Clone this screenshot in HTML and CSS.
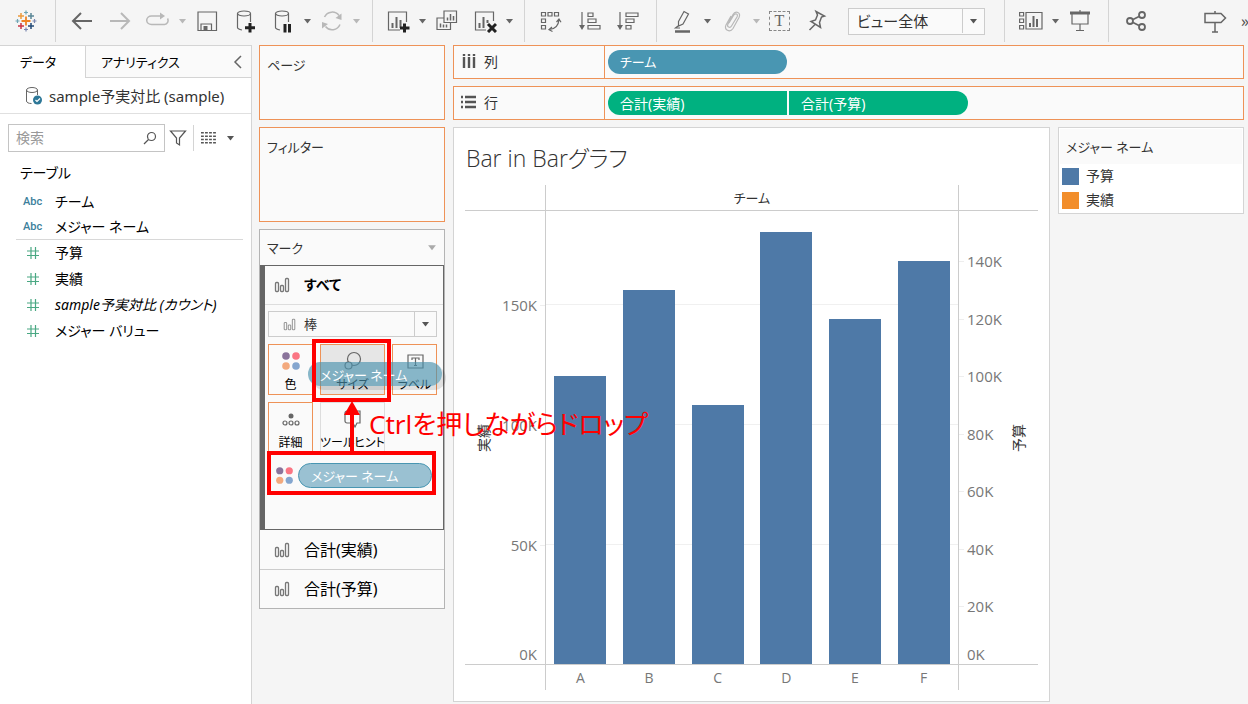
FILE: index.html
```html
<!DOCTYPE html>
<html lang="ja">
<head>
    <meta charset="UTF-8">
    <meta name="viewport" content="width=device-width, initial-scale=1.0">
    <title>Bar in Barグラフ</title>
    <link rel="stylesheet" href="styles.css">
</head>
<body>
    <!-- 共通アイコン -->
    <svg class="symbols" aria-hidden="true">
        <symbol id="bars" viewBox="0 0 16 16">
            <g fill="none" stroke="currentColor" stroke-width="1.3"><rect x="1.5" y="5.5" width="3" height="9" rx="1"/><rect x="6.5" y="8.5" width="3" height="6" rx="1"/><rect x="11.5" y="1.5" width="3" height="13" rx="1"/></g>
        </symbol>
        <symbol id="down" viewBox="0 0 9 6"><path d="M1 1h7L4.5 5.5z" fill="currentColor"/></symbol>
        <symbol id="dots" viewBox="0 0 20 20">
            <circle cx="5" cy="5" r="3.8" fill="#8a749b"/><circle cx="15" cy="5" r="3.8" fill="#fa7583"/>
            <circle cx="5" cy="15" r="3.8" fill="#f3a97d"/><circle cx="15" cy="15" r="3.8" fill="#84a6cf"/>
        </symbol>
        <symbol id="hash" viewBox="0 0 14 14"><path d="M5 1v12M9.5 1v12M1 5h12M1 9.5h12" fill="none" stroke="#4aa883" stroke-width="1.2"/></symbol>
    </svg>

    <!-- ツールバー -->
    <header class="toolbar">
        <div class="group group-logo">
            <button class="tool" aria-label="スタートページ">
                <svg viewBox="0 0 24 24" fill="none">
                    <path d="M12 7.5v9M7.5 12h9" stroke="#ef8424" stroke-width="1.8"/>
                    <path d="M7 4v6M4 7h6" stroke="#eb9a3c" stroke-width="1.5"/>
                    <path d="M17 4v6M14 7h6" stroke="#5b8797" stroke-width="1.5"/>
                    <path d="M7 14v6M4 17h6" stroke="#c93647" stroke-width="1.5"/>
                    <path d="M17 14v6M14 17h6" stroke="#234a76" stroke-width="1.5"/>
                    <path d="M12 1.5v4M10 3.5h4M3.5 10v4M1.5 12h4" stroke="#6fa5b4"/>
                    <path d="M12 18.5v4M10 20.5h4M20.5 10v4M18.5 12h4" stroke="#7986b0"/>
                </svg>
            </button>
        </div>
        <div class="group group-data">
            <button class="tool" aria-label="元に戻す"><svg viewBox="0 0 24 24"><path d="M22 12H3.5M11 4l-8 8 8 8" stroke-width="2"/></svg></button>
            <button class="tool" aria-label="やり直し" disabled><svg viewBox="0 0 24 24"><path d="M2 12h18.5M13 4l8 8-8 8" stroke-width="2"/></svg></button>
            <button class="tool" aria-label="繰り返し" disabled><svg viewBox="0 0 24 24"><path d="M14.5 7H5.5a4.5 4 0 0 0 0 8.5h13a4 4 0 0 0 3-6" stroke-width="1.5"/><path d="M14 3.5 19 7l-5 3.5z" fill="currentColor" stroke="none"/></svg></button>
            <button class="caret" aria-label="繰り返しメニュー" disabled><svg><use href="#down"/></svg></button>
            <button class="tool" aria-label="保存"><svg viewBox="0 0 24 24"><path d="M3 3h18.5v18.5H3zM6 21v-6h10.5v6"/><path d="M8.5 17h4v4h-4z" fill="currentColor" stroke="none"/></svg></button>
            <button class="tool" aria-label="新しいデータソース"><svg viewBox="0 0 24 24"><ellipse cx="11" cy="4.5" rx="6.5" ry="2.5"/><path d="M4.5 4.5v14c0 1.5 2 2 4.5 2.5M17.5 4.5V13"/><path class="strong" d="M17 14v9.5M12 18.7h10"/></svg></button>
            <button class="tool" aria-label="自動更新の一時停止"><svg viewBox="0 0 24 24"><ellipse cx="11" cy="4.5" rx="6.5" ry="2.5"/><path d="M4.5 4.5v14c0 1.5 2 2 4.5 2.5M17.5 4.5V13"/><path class="strong" d="M14 15v8.5M18.5 15v8.5"/></svg></button>
            <button class="caret" aria-label="自動更新メニュー"><svg><use href="#down"/></svg></button>
            <button class="tool" aria-label="更新" disabled><svg viewBox="0 0 24 24"><path d="M4.5 8A8.5 8.5 0 0 1 19 6.5M20 15.5A8.5 8.5 0 0 1 5.5 17.5" stroke-width="1.5"/><path d="M21.5 4.5V11l-6-2zM2 19.5V13l6 2z" fill="currentColor" stroke="none"/></svg></button>
            <button class="caret" aria-label="更新メニュー" disabled><svg><use href="#down"/></svg></button>
        </div>
        <div class="group group-sheet">
            <button class="tool" aria-label="新しいワークシート"><svg viewBox="0 0 24 24"><path d="M14 21H2.5V3h18v10"/><path d="M6.5 19v-5M10.5 19V8M14.5 19v-8" stroke-width="2"/><path class="strong" d="M18.5 14.5v9M14 19h9.5"/></svg></button>
            <button class="caret" aria-label="ワークシートメニュー"><svg><use href="#down"/></svg></button>
            <button class="tool" aria-label="複製"><svg viewBox="0 0 24 24"><path d="M9 2h12.5v11.5H9zM9 9H2v11.5h13.5v-7"/><path d="M12.5 11.5v-3M15.5 11.5V5M18.5 11.5V7M5.5 18.5v-4M8.5 18.5v-3M11.5 18.5v-3" stroke-width="1.5"/></svg></button>
            <button class="tool" aria-label="シートのクリア"><svg viewBox="0 0 24 24"><path d="M13 21H2.5V3h18v9"/><path d="M6.5 19v-5M10.5 19V8M14.5 14v-3" stroke-width="2"/><path class="strong" d="m15 15 8 8m0-8-8 8"/></svg></button>
            <button class="caret" aria-label="クリアメニュー"><svg><use href="#down"/></svg></button>
        </div>
        <div class="group group-sort">
            <button class="tool" aria-label="行と列の交換"><svg viewBox="0 0 24 24"><path d="M2.5 3.5h4v3.5h-4zM9 3.5h4v3.5H9zM15.5 3.5h4v3.5h-4zM2.5 10h4v3.5h-4zM2.5 16.5h4V20h-4zM10.5 20.5c6-.5 9-4 9.5-10M13 18l-3 2.7 3.5 1.8M17.5 13l2.5-3 2 3.3"/></svg></button>
            <button class="tool" aria-label="昇順で並べ替え"><svg viewBox="0 0 24 24"><path d="M5 3v15M11 4h5v3.5h-5zM11 10h8v3.5h-8zM11 16.5h12V20H11z"/><path d="M2 16h6l-3 5z" fill="currentColor" stroke="none"/></svg></button>
            <button class="tool" aria-label="降順で並べ替え"><svg viewBox="0 0 24 24"><path d="M5 3v15M11 4h12v3.5H11zM11 10h8v3.5h-8zM11 16.5h5V20h-5z"/><path d="M2 16h6l-3 5z" fill="currentColor" stroke="none"/></svg></button>
        </div>
        <div class="group group-edit">
            <button class="tool" aria-label="ハイライト"><svg viewBox="0 0 24 24"><path d="m7.5 12.5 5.5-10 4.5 2.5-5.5 10-4.5 2zM7.5 12.5V17M7 17l-2.5 2h4.5"/><path d="M4 22.5h15" stroke-width="2.5"/></svg></button>
            <button class="caret" aria-label="ハイライトメニュー"><svg><use href="#down"/></svg></button>
            <button class="tool" aria-label="グループ" disabled><svg viewBox="0 0 24 24"><path d="m9 14 4.5-7.5c2-3 5-1.5 3.5 1.5L11.5 17c-1.500 2.500-5 1-3.500-2L13 5.500c2.500-4.500 8.500-2 6 3l-6 11c-3 4.500-9.500 1.500-7-3.500L11 7"/></svg></button>
            <button class="caret" aria-label="グループメニュー" disabled><svg><use href="#down"/></svg></button>
            <button class="tool label-tool" aria-label="マークラベルの表示">T</button>
            <button class="tool" aria-label="固定"><svg viewBox="0 0 24 24"><path d="m12 2.500 8.500 4.500-3 1-2 5.500 1 5-9.500-6 4.500-1.500 2-5zM11 15.500l-5.500 5.500" stroke-width="1.500"/></svg></button>
            <span class="drop fit-drop">
                <select aria-label="適合"><option>ビュー全体</option></select>
                <svg><use href="#down"/></svg>
            </span>
        </div>
        <div class="group group-show">
            <button class="tool" aria-label="表示形式"><svg viewBox="0 0 24 24"><path d="M.6 3.5h4v3.5h-4zM.6 10h4v3.5h-4zM.6 16.5h4V20h-4zM7 3.5h16V20H7z"/><path d="M11 18v-4M14.5 18V7M18 18v-8" stroke-width="2"/></svg></button>
            <button class="caret" aria-label="表示メニュー"><svg><use href="#down"/></svg></button>
            <button class="tool" aria-label="プレゼンテーションモード"><svg viewBox="0 0 24 24"><path d="M2 4h20" stroke-width="3"/><path d="M4 5v10h16V5M12 15v6M8 21.5h8M12 1v2"/></svg></button>
        </div>
        <div class="group group-share">
            <button class="tool" aria-label="共有"><svg viewBox="0 0 24 24"><g stroke-width="1.8"><circle cx="6" cy="12" r="3"/><circle cx="18" cy="6" r="3"/><circle cx="18" cy="18" r="3"/><path d="m9 10.5 6-3M9 13.5l6 3"/></g></svg></button>
        </div>
        <div class="group group-guide">
            <button class="tool" aria-label="ガイド"><svg viewBox="0 0 24 24"><path d="M2 4.5h16l4.5 4.5L18 13.5H2zM12 13.5V23M12 2v2.5M9 23h6" stroke-width="1.5"/></svg></button>
            <button class="more" aria-label="その他">»</button>
        </div>
    </header>

    <div class="workspace">
        <!-- データペイン -->
        <aside class="data-pane">
            <div class="tabs">
                <button class="tab tab-active">データ</button>
                <button class="tab tab-other">アナリティクス<svg viewBox="0 0 10 14"><path d="M8 1 2 7l6 6" fill="none" stroke="currentColor" stroke-width="1.5"/></svg></button>
            </div>
            <a class="source" href="#source">
                <svg viewBox="0 0 18 20" fill="none" stroke="#666"><ellipse cx="7" cy="4" rx="5.5" ry="2.5"/><path d="M1.5 4v11c0 1.5 2 2.5 5 2.5M12.5 4v5"/><circle cx="12.5" cy="14" r="4.5" fill="#2d7797" stroke="none"/><path d="m10.5 14 1.5 1.5 3-3" stroke="#fff" stroke-width="1.2"/></svg>
                sample予実対比 (sample)
            </a>
            <div class="search-row">
                <label class="search">
                    <input type="text" placeholder="検索" aria-label="検索">
                    <svg viewBox="0 0 14 14"><circle cx="8.5" cy="5.5" r="4"/><path d="M5.5 8.5 1 13"/></svg>
                </label>
                <button class="icon-button" aria-label="フィルター"><svg viewBox="0 0 18 18"><path d="M1.5 2h15l-6 7v7l-3-2V9z"/></svg></button>
                <button class="icon-button view-button" aria-label="表示"><svg viewBox="0 0 16 14"><path d="M0 1.5h16M0 5h16M0 8.5h16M0 12h16" stroke-width="1.6" stroke-dasharray="3 1.3"/></svg></button>
                <button class="caret" aria-label="表示メニュー"><svg><use href="#down"/></svg></button>
            </div>
            <h2 class="table-title">テーブル</h2>
            <ul class="fields dimensions">
                <li><span class="abc">Abc</span>チーム</li>
                <li><span class="abc">Abc</span>メジャー ネーム</li>
            </ul>
            <ul class="fields measures">
                <li><svg><use href="#hash"/></svg>予算</li>
                <li><svg><use href="#hash"/></svg>実績</li>
                <li class="count"><svg><use href="#hash"/></svg>sample予実対比 (カウント)</li>
                <li><svg><use href="#hash"/></svg>メジャー バリュー</li>
            </ul>
        </aside>

        <!-- シェルフとマークカード -->
        <div class="cards">
            <section class="card pages">ページ</section>
            <section class="card filters">フィルター</section>
            <section class="marks">
                <div class="marks-head">マーク<svg><use href="#down"/></svg></div>
                <div class="marks-all">
                    <div class="mark-row mark-current"><svg><use href="#bars"/></svg>すべて</div>
                    <div class="mark-body">
                        <div class="drop mark-type">
                            <svg class="type-icon"><use href="#bars"/></svg>
                            <select aria-label="マークタイプ"><option>棒</option></select>
                            <svg><use href="#down"/></svg>
                        </div>
                        <div class="mark-buttons">
                            <button><svg><use href="#dots"/></svg>色</button>
                            <button class="hovered"><svg viewBox="0 0 20 20"><circle cx="11" cy="8" r="6.5"/><circle cx="5.5" cy="14.5" r="3.5" fill="#e6e6e6"/></svg>サイズ</button>
                            <button><svg viewBox="0 0 20 20"><path d="M3 4h15v13H3zM7 9V7h7v2M10.5 7v7.5M9 14.5h3"/></svg>ラベル</button>
                            <button><svg viewBox="0 0 20 20"><circle cx="10" cy="7" r="2.5" fill="#666" stroke="none"/><circle cx="4" cy="14" r="2"/><circle cx="10" cy="14" r="2"/><circle cx="16" cy="14" r="2"/></svg>詳細</button>
                            <button class="plain"><svg viewBox="0 0 20 20"><path d="M4 2h13v12h-3l-2 4-2-4H4a2 2 0 0 1-2-2V4a2 2 0 0 1 2-2z"/></svg>ツールヒント</button>
                        </div>
                        <div class="mark-pill-row">
                            <svg><use href="#dots"/></svg>
                            <span class="mark-pill">メジャー ネーム</span>
                        </div>
                    </div>
                </div>
                <div class="mark-row"><svg><use href="#bars"/></svg>合計(実績)</div>
                <div class="mark-row"><svg><use href="#bars"/></svg>合計(予算)</div>

                <!-- ドラッグ中のピルと操作の説明 -->
                <span class="drag-pill">メジャー ネーム</span>
                <span class="frame frame-target"></span>
                <span class="frame frame-source"></span>
                <svg class="arrow" viewBox="0 0 16 54"><path d="M8 54V12" stroke="#f00" stroke-width="4"/><path d="M8 0 16 14H0z" fill="#f00"/></svg>
                <p class="note">Ctrlを押しながらドロップ</p>
            </section>
        </div>

        <main class="sheet">
            <div class="shelf">
                <div class="shelf-name"><svg viewBox="0 0 16 16"><path d="M3 0v2M8 0v2M13 0v2M3 3v11M8 3v11M13 3v11" stroke-width="2.4"/></svg>列</div>
                <div class="pills"><span class="pill pill-blue">チーム</span></div>
            </div>
            <div class="shelf">
                <div class="shelf-name"><svg viewBox="0 0 16 16"><path d="M0 2h2M0 7h2M0 12h2M4 2h11M4 7h11M4 12h11" stroke-width="2.4"/></svg>行</div>
                <div class="pills">
                    <span class="pill pill-green pill-first">合計(実績)</span>
                    <span class="pill pill-green pill-last">合計(予算)</span>
                </div>
            </div>

            <div class="content">
                <section class="view">
                    <h1>Bar in Barグラフ</h1>
                    <div class="chart">
                        <div class="chart-head"></div>
                        <div class="chart-head chart-middle">チーム</div>
                        <div class="chart-head"></div>

                        <div class="axis axis-left">
                            <span class="axis-title">実績</span>
                            <span class="tick tick-zero">0K</span>
                            <span class="tick" style="bottom: 26.3%">50K</span>
                            <span class="tick" style="bottom: 52.8%">100K</span>
                            <span class="tick" style="bottom: 79.3%">150K</span>
                        </div>
                        <div class="plot chart-middle">
                            <i class="grid-line" style="bottom: 26.3%"></i>
                            <i class="grid-line" style="bottom: 52.8%"></i>
                            <i class="grid-line" style="bottom: 79.3%"></i>
                            <div class="bar" style="height: 63.5%"></div>
                            <div class="bar" style="height: 82.5%"></div>
                            <div class="bar" style="height: 57.2%"></div>
                            <div class="bar" style="height: 95.3%"></div>
                            <div class="bar" style="height: 76.2%"></div>
                            <div class="bar" style="height: 88.9%"></div>
                        </div>
                        <div class="axis axis-right">
                            <span class="tick tick-zero">0K</span>
                            <span class="tick" style="bottom: 12.7%">20K</span>
                            <span class="tick" style="bottom: 25.4%">40K</span>
                            <span class="tick" style="bottom: 38.1%">60K</span>
                            <span class="tick" style="bottom: 50.8%">80K</span>
                            <span class="tick" style="bottom: 63.5%">100K</span>
                            <span class="tick" style="bottom: 76.2%">120K</span>
                            <span class="tick" style="bottom: 88.9%">140K</span>
                            <span class="axis-title">予算</span>
                        </div>

                        <div class="chart-foot"></div>
                        <div class="chart-foot chart-middle categories">
                            <span>A</span><span>B</span><span>C</span><span>D</span><span>E</span><span>F</span>
                        </div>
                        <div class="chart-foot"></div>
                    </div>
                </section>
                <section class="legend">
                    <h2>メジャー ネーム</h2>
                    <ul>
                        <li><i class="swatch swatch-budget"></i>予算</li>
                        <li><i class="swatch swatch-actual"></i>実績</li>
                    </ul>
                </section>
            </div>
        </main>
    </div>
</body>
</html>
```
FILE: styles.css
```css
* {
    box-sizing: border-box;
}

body {
    display: flex;
    flex-direction: column;
    min-height: 100vh;
    margin: 0;
    background-color: #f5f5f5;
    color: #000;
    font-family: "Noto Sans", "Noto Sans CJK JP", sans-serif;
    font-size: 14px;
    line-height: 20px;
    font-feature-settings: "palt";
}

button, input, select {
    padding: 0;
    border: 0;
    background: none;
    color: inherit;
    font: inherit;
    font-feature-settings: inherit;
}

h1, h2, ul, p {
    margin: 0;
    padding: 0;
    font-weight: normal;
    list-style: none;
}

svg {
    display: block;
    flex: none;
}

.symbols {
    position: absolute;
    width: 0;
    height: 0;
}

/* ツールバー */
.toolbar {
    display: flex;
    height: 45px;
    padding-bottom: 3px;
    color: #666;
    overflow: hidden;
}

.group {
    display: flex;
    align-items: center;
    gap: 14px;
    padding: 0 17px 0 14px;
    border-right: 1px solid #d4d4d4;
}

.group-sheet {
    padding: 0 16px 0 13px;
}

.group-edit {
    padding: 0 19px 0 14px;
}

.group-show {
    padding: 0 16px 0 14px;
}

.group-share {
    padding: 0 15px;
    border: 0;
}

.group-guide {
    padding: 0;
    margin-left: auto;
    border: 0;
}

.tool {
    width: 24px;
    height: 24px;
}

.tool svg {
    width: 24px;
    height: 24px;
    fill: none;
    stroke: currentColor;
    stroke-width: 1.2;
}

.group-logo .tool svg {
    stroke: none;
}

.tool .strong {
    stroke: #222;
    stroke-width: 3;
}

.tool:disabled, .caret:disabled {
    color: #b8b8b8;
}

.caret {
    width: 9px;
    margin: 0 -6px;
}

.caret svg {
    width: 9px;
    height: 6px;
}

.label-tool {
    width: 21px;
    height: 20px;
    border: 1px dashed #888;
    font-family: "Liberation Serif", serif;
    font-size: 16px;
    line-height: 18px;
}

.more {
    width: 7px;
    color: #555;
    font-size: 16px;
}

.drop {
    display: flex;
    align-items: center;
    position: relative;
    border: 1px solid #ccc;
    background-color: #fafafa;
}

.drop select {
    flex: 1;
    align-self: stretch;
    appearance: none;
    padding-left: 8px;
}

.drop > svg:last-child {
    width: 22px;
    height: 24px;
    padding: 9px 6px;
    border-left: 1px solid #ccc;
    color: #555;
    pointer-events: none;
}

.fit-drop {
    width: 137px;
    height: 27px;
    margin-left: 6px;
    color: #333;
    font-size: 15px;
}

/* 全体のレイアウト */
.workspace {
    display: grid;
    grid-template-columns: 252px 186px 1fr;
    gap: 7px;
    flex: 1;
    padding-right: 4px;
}

/* データペイン */
.data-pane {
    border-top: 1px solid #d4d4d4;
    border-right: 1px solid #d4d4d4;
    background-color: #fff;
}

.tabs {
    display: flex;
    height: 32px;
}

.tab {
    font-size: 13px;
}

.tab-active {
    width: 85px;
    padding-right: 9px;
}

.tab-other {
    display: flex;
    flex: 1;
    align-items: center;
    justify-content: space-between;
    padding: 0 8px 0 15px;
    border-left: 1px solid #d4d4d4;
    border-bottom: 1px solid #d4d4d4;
    background-color: #fafafa;
}

.tab-other svg {
    width: 10px;
    height: 14px;
    color: #666;
}

.source {
    display: flex;
    align-items: center;
    gap: 6px;
    height: 36px;
    padding-left: 25px;
    border-bottom: 1px solid #e0e0e0;
    color: #333;
    font-size: 15px;
    text-decoration: none;
    white-space: nowrap;
}

.source svg {
    width: 18px;
    height: 20px;
}

.search-row {
    display: flex;
    align-items: center;
    padding: 10px 0 9px 8px;
    color: #555;
}

.search {
    display: flex;
    align-items: center;
    width: 157px;
    height: 28px;
    padding: 0 7px;
    border: 1px solid #c4c4c4;
}

.search input {
    flex: 1;
    min-width: 0;
}

.search input::placeholder {
    color: #999;
}

.search svg, .icon-button svg {
    width: 14px;
    height: 14px;
    fill: none;
    stroke: currentColor;
    stroke-width: 1.2;
}

.icon-button {
    padding: 4px;
}

.icon-button svg {
    width: 18px;
    height: 18px;
}

.view-button {
    margin-left: 2px;
    padding: 4px 7px;
    border-left: 1px solid #d4d4d4;
}

.view-button svg {
    width: 15px;
}

.search-row .caret {
    margin: 0 3px;
}

.table-title {
    height: 28px;
    padding-left: 20px;
    font-size: 14px;
    line-height: 24px;
}

.fields li {
    display: flex;
    align-items: center;
    height: 26px;
    white-space: nowrap;
}

.fields svg {
    width: 14px;
    height: 14px;
    margin: 0 15px 0 26px;
}

.dimensions {
    margin: 0 8px 0 16px;
    border-bottom: 1px solid #d8d8d8;
}

.dimensions li {
    height: 25px;
}

.abc {
    width: 39px;
    padding-left: 7px;
    color: #3c7f9b;
    font-family: Roboto, sans-serif;
    font-size: 11px;
    font-weight: 500;
}

.count {
    font-style: italic;
}

/* カード */
.cards {
    display: flex;
    flex-direction: column;
    gap: 7px;
    position: relative;
    z-index: 1;
    min-width: 0;
    color: #333;
    font-size: 13px;
}

.card {
    height: 75px;
    padding: 9px 7px;
    border: 1px solid #ee9257;
    background-color: #fafafa;
}

.filters {
    height: 95px;
}

.marks {
    position: relative;
    border: 1px solid #b4b4b4;
    background-color: #fafafa;
}

.marks-head {
    display: flex;
    align-items: center;
    justify-content: space-between;
    height: 35px;
    padding: 0 7px;
}

.marks-head svg {
    width: 10px;
    height: 7px;
    color: #aaa;
}

.marks-all {
    height: 265px;
    border: 1px solid #666;
    border-left-width: 5px;
}

.mark-row {
    display: flex;
    align-items: center;
    gap: 14px;
    height: 39px;
    padding-left: 14px;
    color: #000;
    font-size: 16px;
}

.mark-row + .mark-row {
    border-top: 1px solid #ccc;
}

.mark-row svg {
    width: 16px;
    height: 16px;
    color: #777;
}

.mark-current {
    padding-left: 9px;
    border-bottom: 1px solid #ddd;
    font-size: 14px;
    font-weight: bold;
}

.mark-body {
    padding: 6px 6px 0 3px;
}

.mark-type {
    height: 26px;
    padding-left: 14px;
    color: #333;
}

.mark-type .type-icon {
    width: 13px;
    height: 13px;
    color: #999;
}

.mark-buttons {
    display: grid;
    grid-template-columns: 45px minmax(0, 1fr) 45px;
    gap: 7px;
    padding: 7px 0 9px;
}

.mark-buttons button {
    display: flex;
    flex-direction: column;
    align-items: center;
    min-width: 0;
    height: 51px;
    padding-top: 6px;
    border: 1px solid #ee9257;
    color: #000;
    font-size: 12px;
    line-height: 28px;
    white-space: nowrap;
}

.mark-buttons svg {
    width: 20px;
    height: 20px;
    fill: none;
    stroke: #666;
    stroke-width: 1.2;
}

.mark-buttons .hovered {
    background-color: #e6e6e6;
}

.mark-buttons use {
    stroke: none;
}

.mark-buttons .plain {
    border-color: #ddd;
}

.mark-pill-row {
    display: flex;
    align-items: center;
    gap: 4px;
    padding: 1px 5px 0 7px;
}

.mark-pill-row svg {
    width: 19px;
    height: 19px;
}

.mark-pill {
    flex: 1;
    height: 25px;
    padding-left: 12px;
    border: 1px solid #4996b2;
    border-radius: 13px;
    background-color: #9ac1d2;
    color: #fff;
    line-height: 25px;
}

.drag-pill {
    position: absolute;
    top: 132px;
    left: 48px;
    width: 134px;
    height: 24px;
    padding-left: 12px;
    border-radius: 12px;
    background-color: rgba(73, 146, 174, 0.65);
    box-shadow: 4px 4px 0 rgba(0, 0, 0, 0.1);
    color: #fff;
    line-height: 26px;
}

.frame {
    position: absolute;
    border: 4px solid #f00;
}

.frame-target {
    top: 109px;
    left: 52px;
    width: 79px;
    height: 63px;
}

.frame-source {
    top: 221px;
    left: 7px;
    width: 169px;
    height: 44px;
}

.arrow {
    position: absolute;
    top: 171px;
    left: 84px;
    width: 16px;
    height: 54px;
}

.note {
    position: absolute;
    top: 174px;
    left: 109px;
    color: #f00;
    font-size: 26px;
    line-height: 40px;
    white-space: nowrap;
}

/* 行・列シェルフ */
.sheet {
    display: flex;
    flex-direction: column;
    gap: 7px;
    min-width: 0;
    margin-left: 1px;
    padding-bottom: 2px;
}

.shelf {
    display: flex;
    height: 34px;
    border: 1px solid #ee9257;
    background-color: #fafafa;
    color: #333;
}

.shelf-name {
    display: flex;
    align-items: center;
    gap: 7px;
    width: 151px;
    padding-left: 7px;
    border-right: 1px solid #ee9257;
}

.shelf-name svg {
    width: 16px;
    height: 16px;
    stroke: #555;
}

.pills {
    display: flex;
    align-items: center;
    gap: 2px;
    padding-left: 3px;
}

.pill {
    width: 179px;
    height: 24px;
    padding-left: 12px;
    border-radius: 12px;
    color: #fff;
    font-size: 13px;
    line-height: 25px;
}

.pill-blue {
    background-color: #4996b2;
}

.pill-green {
    background-color: #00b180;
    font-size: 14px;
}

.pill-first {
    border-radius: 12px 0 0 12px;
}

.pill-last {
    border-radius: 0 12px 12px 0;
}

/* ビュー */
.content {
    display: grid;
    grid-template-columns: 1fr 186px;
    align-items: start;
    gap: 8px;
    flex: 1;
}

.view {
    display: flex;
    flex-direction: column;
    align-self: stretch;
    padding: 0 11px 11px;
    border: 1px solid #d4d4d4;
    background-color: #fff;
    color: #333;
}

.view h1 {
    height: 57px;
    padding-left: 1px;
    font-family: "Open Sans", "Noto Sans CJK JP", sans-serif;
    font-size: 23px;
    font-weight: 300;
    line-height: 61px;
}

.chart {
    display: grid;
    grid-template-columns: 80px 1fr 79px;
    grid-template-rows: 26px 1fr 26px;
    flex: 1;
}

.chart-head {
    border-bottom: 1px solid #ccc;
    font-size: 13px;
    line-height: 26px;
    text-align: center;
}

.chart-middle {
    border-right: 1px solid #ccc;
    border-left: 1px solid #ccc;
}

.chart-foot {
    border-top: 1px solid #ccc;
}

.axis {
    display: flex;
    align-items: center;
    position: relative;
}

.axis-left {
    padding-left: 9px;
}

.axis-right {
    justify-content: flex-end;
    padding-right: 9px;
}

.axis-title {
    writing-mode: vertical-rl;
    text-orientation: sideways;
    transform: rotate(180deg);
}

.tick {
    position: absolute;
    left: 0;
    height: 20px;
    margin-bottom: -10px;
    padding-left: 8px;
    color: #777;
    font-family: "Open Sans", sans-serif;
    font-size: 15px;
}

.axis-left .tick {
    right: 0;
    left: auto;
    padding: 0 8px 0 0;
}

.tick::after {
    content: "";
    position: absolute;
    top: 10px;
    left: 0;
    width: 5px;
    border-top: 1px solid #eee;
}

.axis-left .tick::after {
    right: 0;
    left: auto;
}

.tick-zero {
    bottom: 0;
    margin-bottom: 0;
}

.tick-zero::after {
    display: none;
}

.plot {
    display: grid;
    grid-template-columns: repeat(6, 1fr);
    align-items: end;
    justify-items: center;
    position: relative;
}

.grid-line {
    position: absolute;
    right: 0;
    left: 0;
    border-top: 1px solid #f0f0f0;
}

.bar {
    position: relative;
    width: 76%;
    background-color: #4e79a7;
}

.categories {
    display: grid;
    grid-template-columns: repeat(6, 1fr);
    color: #777;
    font-family: "Open Sans", sans-serif;
    line-height: 26px;
    text-align: center;
}

/* 凡例 */
.legend {
    padding: 1px;
    border: 1px solid #d4d4d4;
    background-color: #fff;
    color: #333;
}

.legend h2 {
    height: 35px;
    padding-left: 6px;
    background-color: #fafafa;
    font-size: 13px;
    line-height: 37px;
}

.legend li {
    display: flex;
    align-items: center;
    gap: 7px;
    height: 24px;
    padding-left: 2px;
}

.swatch {
    width: 17px;
    height: 17px;
}

.swatch-budget {
    background-color: #4e79a7;
}

.swatch-actual {
    background-color: #f28e2b;
}
```
